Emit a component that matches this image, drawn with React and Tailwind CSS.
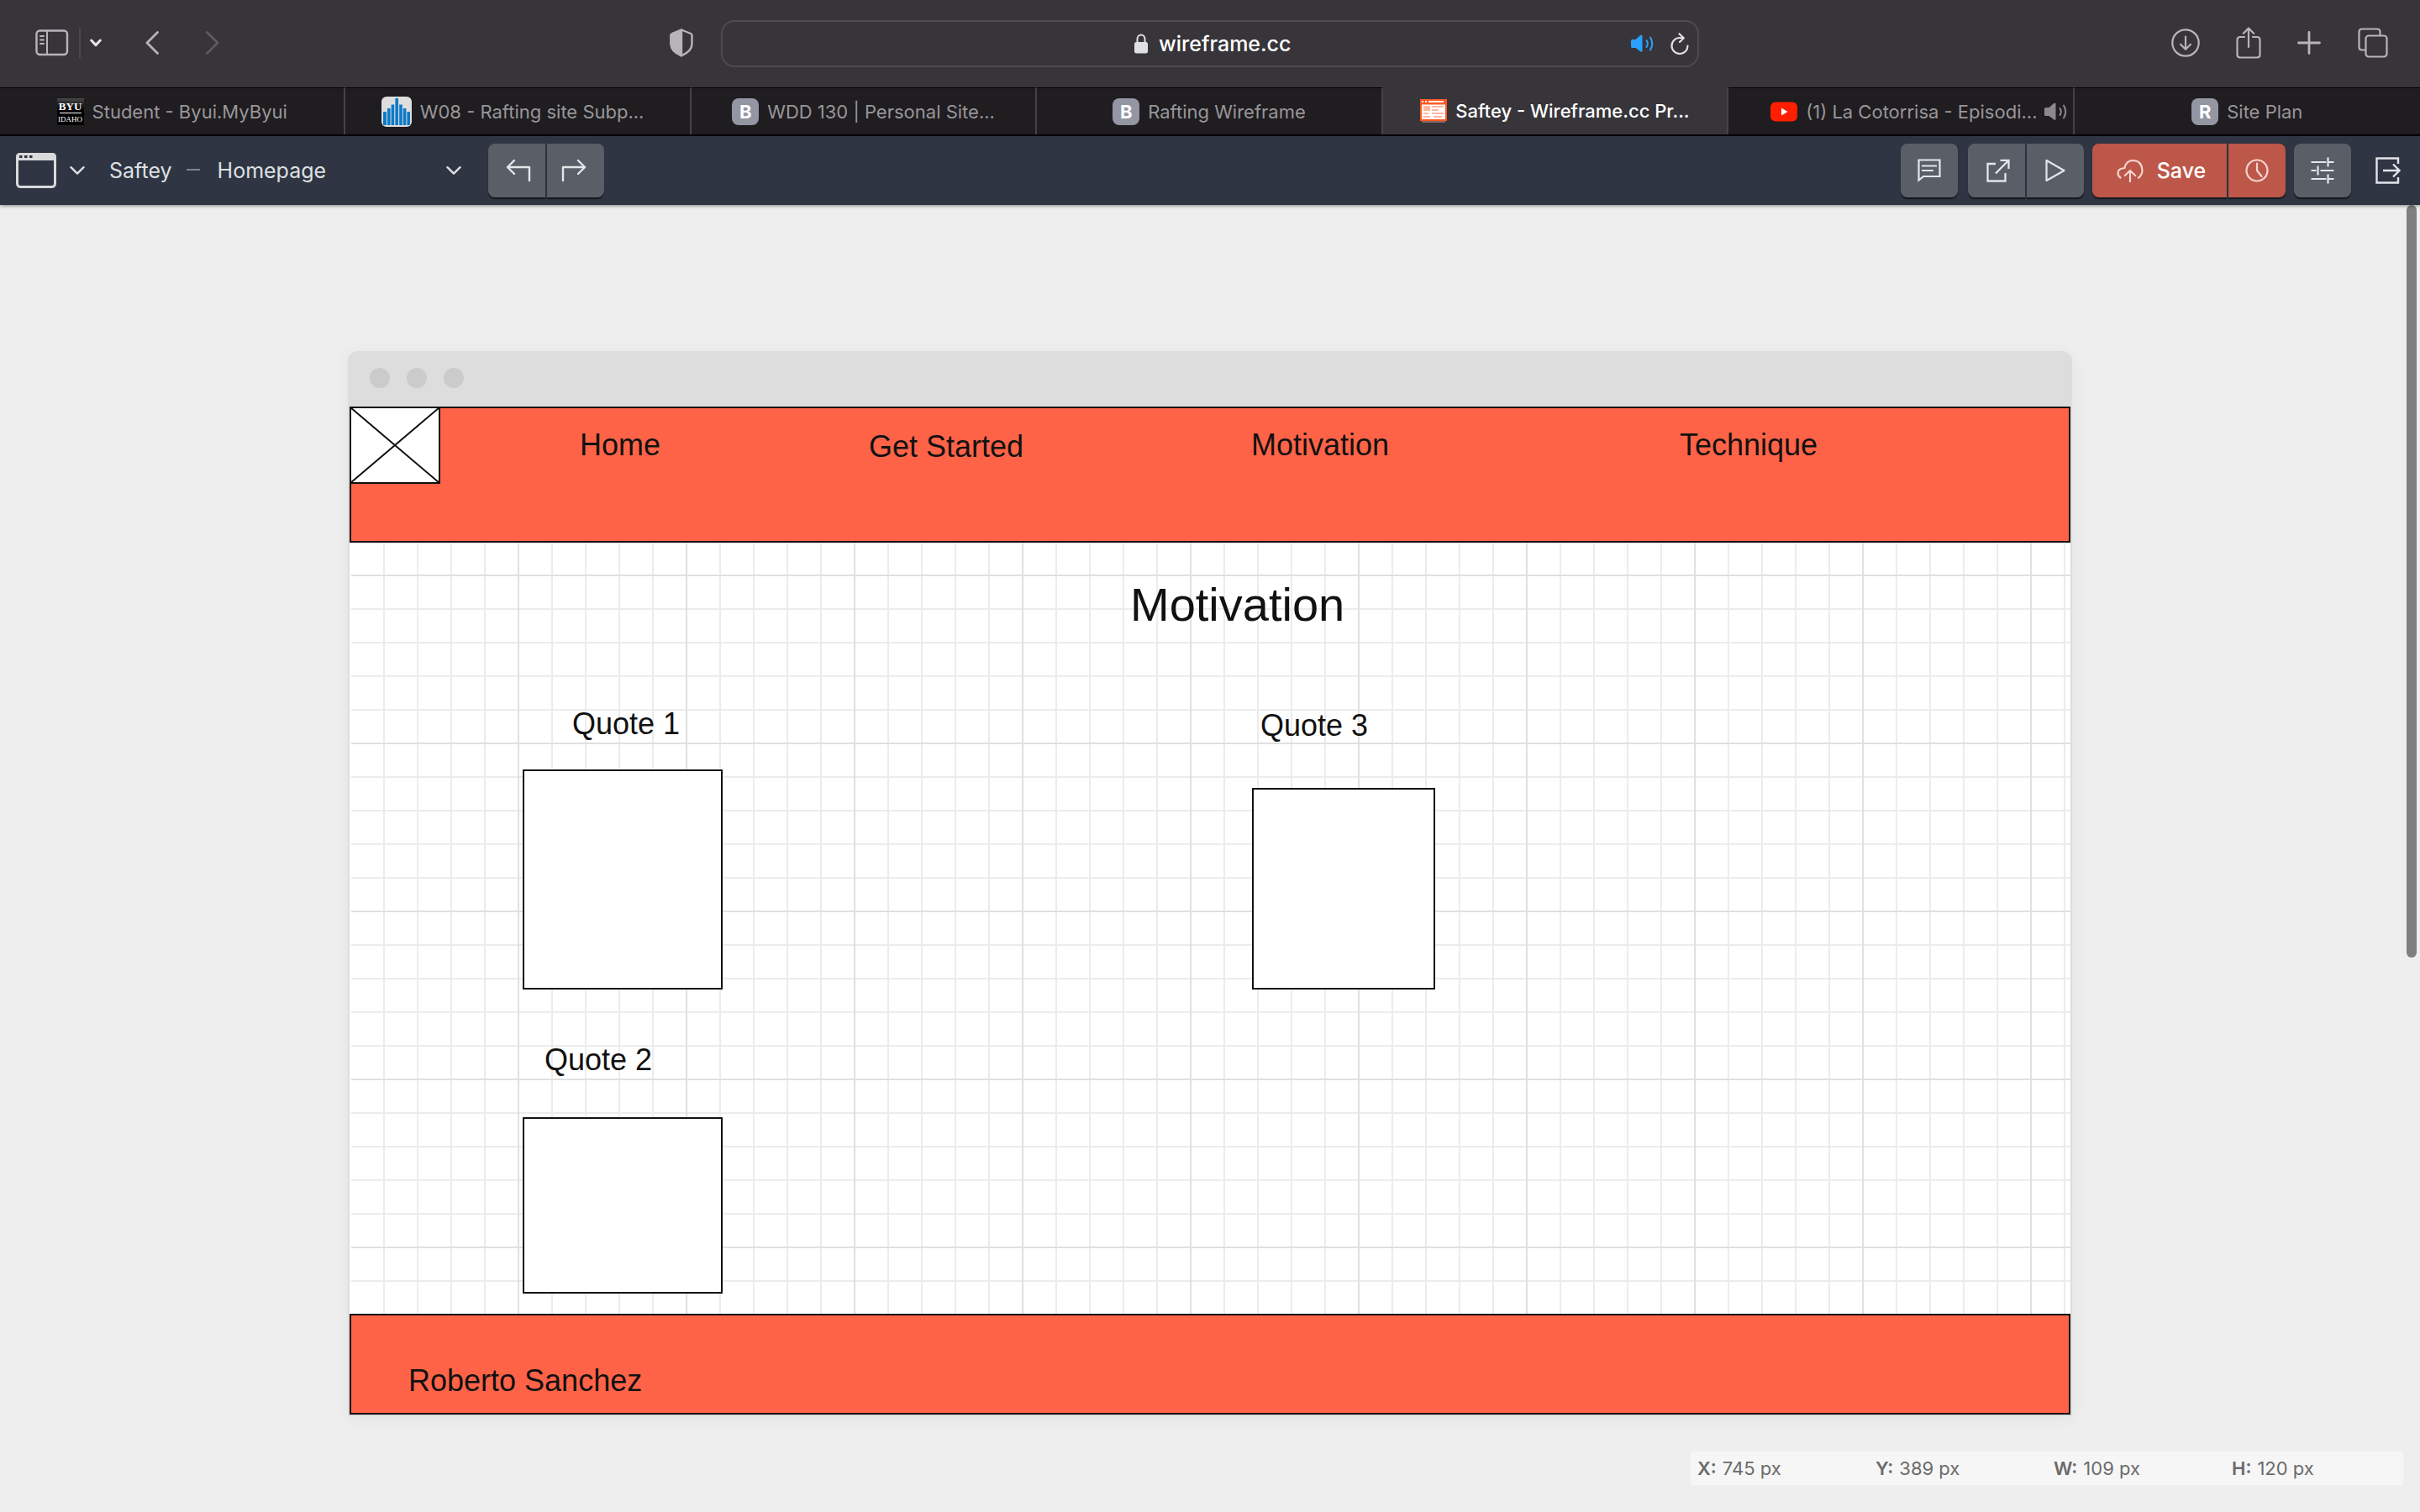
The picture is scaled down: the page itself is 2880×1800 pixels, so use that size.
import React from "react";

const stroke = { fill: "none", stroke: "currentColor", strokeLinecap: "round", strokeLinejoin: "round" };

function Chevron({ className }) {
  return (
    <svg viewBox="0 0 18 10" className={className} {...stroke} strokeWidth="2.4" aria-hidden="true">
      <path d="M1.5 1.2 9 8.6l7.500-7.400" />
    </svg>
  );
}

function Speaker({ className }) {
  return (
    <svg viewBox="0 0 28 22" className={className} {...stroke} strokeWidth="2" aria-hidden="true">
      <path d="M1 7.500Q1 6 2.500 6H6.500L12.500.800Q14.500.200 14.500 2V19.500Q14.500 21.600 12.500 20.600L6.500 16H2.500Q1 16 1 14.500Z" fill="currentColor" stroke="none" />
      <path d="M19.500 7q2.600 4 0 8M24 3.500q4.500 7.500 0 15" />
    </svg>
  );
}

function LetterIcon({ letter }) {
  return (
    <span className="flex size-8 shrink-0 items-center justify-center rounded-lg bg-[#9496a3] text-[22px] font-bold text-white">
      {letter}
    </span>
  );
}

function ByuIcon() {
  return (
    <span className="flex h-8 w-8 shrink-0 flex-col items-center bg-gradient-to-b from-[#4a4a4a] to-black to-60% text-white">
      <span className="mt-[3px] font-['Liberation_Serif',serif] text-[13px] leading-[13px] font-bold">BYU</span>
      <span className="mt-px h-px w-[26px] bg-white" />
      <span className="mt-[2px] font-['Liberation_Serif',serif] text-[9px] leading-[11px]">IDAHO</span>
    </span>
  );
}

function BarsIcon() {
  return (
    <svg viewBox="0 0 36 36" className="size-9 shrink-0" aria-hidden="true">
      <rect width="36" height="36" rx="6" fill="#dedede" />
      <path fill="#0b7ac6" d="M2 18h4v16H2zM7 14h3.600v20H7zM11.600 9.500h3.600V34h-3.600zM16.400 2h3.600v32h-3.600zM21.200 9.500h3.600V34h-3.600zM25.800 14h3.600v20h-3.600zM30.400 18H34v16h-3.600z" />
    </svg>
  );
}

function WireframeIcon() {
  return (
    <svg viewBox="0 0 32 28" className="h-7 w-8 shrink-0" aria-hidden="true">
      <rect x="2" y="24" width="28" height="4" fill="#8b6663" />
      <rect width="32" height="26" fill="#ff5722" />
      <path fill="#fff" d="M2 2h2v2H2zM6 2h2v2H6zM10 2h18v2H10zM2 6.500h28V24H2z" />
      <path fill="#ffb69c" d="M4 8h8v6H4zM14 8h14v2H14zM14 12h8v2h-8zM4 16h6v2H4zM14 16h14v2H14zM4 20h8v2H4zM16 20h10v2H16z" />
    </svg>
  );
}

function YoutubeIcon() {
  return (
    <svg viewBox="0 0 32 24" className="h-6 w-8 shrink-0" aria-hidden="true">
      <rect width="32" height="23" y=".5" rx="6" fill="#ff1f00" />
      <path d="M13 7.500v9l7.500-4.500z" fill="#fff" />
    </svg>
  );
}

const tabs = [
  { label: "Student - Byui.MyByui", icon: <ByuIcon /> },
  { label: "W08 - Rafting site Subp...", icon: <BarsIcon />, pad: "pr-3" },
  { label: "WDD 130 | Personal Site...", icon: <LetterIcon letter="B" /> },
  { label: "Rafting Wireframe", icon: <LetterIcon letter="B" /> },
  { label: "Saftey - Wireframe.cc Pr...", icon: <WireframeIcon />, active: true },
  { label: "(1) La Cotorrisa - Episodi...", icon: <YoutubeIcon />, audio: true, pad: "pl-4" },
  { label: "Site Plan", icon: <LetterIcon letter="R" /> },
];

function BrowserBar() {
  return (
    <header className="flex h-[104px] items-center bg-[#37353a] pb-[2px] text-[#b7b4ba]">
      <div className="flex flex-1 items-center pl-[38px]">
        <button aria-label="Sidebar" className="ml-1">
          <svg viewBox="0 0 40 32" className="h-8 w-10" {...stroke} strokeWidth="2.400" aria-hidden="true">
            <rect x="1.500" y="1.500" width="36.500" height="28.500" rx="4" />
            <path d="M14 1.500V30M6 8h4M6 12.500h4M6 17h4" strokeWidth="2" />
          </svg>
        </button>
        <span className="ml-3 h-9 w-[2px] bg-[#4a484d]" />
        <button aria-label="Tab groups" className="ml-[11px] text-[#e6e4e8]">
          <svg viewBox="0 0 14 10" className="h-[10px] w-[14px]" {...stroke} strokeWidth="3" aria-hidden="true">
            <path d="M1.700 2 7 7.600 12.300 2" />
          </svg>
        </button>
        <button aria-label="Back" className="ml-[52px]">
          <svg viewBox="0 0 16 28" className="h-7 w-4" {...stroke} strokeWidth="2.800" aria-hidden="true">
            <path d="M14.500 1.500 2 14l12.500 12.500" />
          </svg>
        </button>
        <button aria-label="Forward" className="ml-14 text-[#5d5b60]">
          <svg viewBox="0 0 16 28" className="h-7 w-4" {...stroke} strokeWidth="2.800" aria-hidden="true">
            <path d="M1.500 1.500 14 14 1.500 26.500" />
          </svg>
        </button>
        <button aria-label="Privacy report" className="mr-[33px] ml-auto">
          <svg viewBox="0 0 28 34" className="h-[34px] w-7" {...stroke} strokeWidth="2.400" aria-hidden="true">
            <path d="M14 1.500 25 6Q26.500 6.600 26.500 8V18Q26.500 27 14 32.300 1.500 27 1.500 18V8Q1.500 6.600 3 6Z" />
            <path d="M14 1.500V32.300Q1.500 27 1.500 18V8Q1.500 6.600 3 6Z" fill="currentColor" />
          </svg>
        </button>
      </div>
      <div className="relative mt-[2px] flex h-14 w-[1164px] items-center justify-center rounded-2xl border-2 border-[#4d4b50] pl-2 text-white">
        <svg viewBox="0 0 18 24" className="mr-3 h-6 w-[18px] text-[#e0e0e2]" aria-hidden="true">
          <rect x="1" y="10" width="16" height="13.500" rx="2.500" fill="currentColor" />
          <path d="M4.500 11V6.500a4.500 5 0 0 1 9 0V11" {...stroke} strokeWidth="2" />
        </svg>
        <input aria-label="Address" readOnly value="wireframe.cc" className="w-[160px] bg-transparent text-[25px] leading-8 font-medium outline-none" />
        <div className="absolute right-[10px] flex items-center gap-5">
          <button aria-label="Mute tab" className="text-[#2aa0ff]">
            <Speaker className="h-[22px] w-7" />
          </button>
          <button aria-label="Reload" className="text-[#e0dfe2]">
            <svg viewBox="0 0 22 26" className="h-[26px] w-[22px]" {...stroke} strokeWidth="2.200" aria-hidden="true">
              <path d="M20.500 15.500A9.500 9.500 0 1 1 11 6h4.500M10.500 1.200 15.800 6.200 11 11" />
            </svg>
          </button>
        </div>
      </div>
      <div className="flex flex-1 items-center justify-end pr-[38px]">
        <button aria-label="Downloads">
          <svg viewBox="0 0 34 34" className="size-[34px]" {...stroke} strokeWidth="2.200" aria-hidden="true">
            <circle cx="17" cy="17" r="15.700" />
            <path d="M17 9.500V24.500M11 18.800l6 6 6-6" />
          </svg>
        </button>
        <button aria-label="Share" className="ml-[42px]">
          <svg viewBox="0 0 32 38" className="h-[38px] w-8" {...stroke} strokeWidth="2.200" aria-hidden="true">
            <path d="M11 12H6Q2.500 12 2.500 15.500V33Q2.500 36.500 6 36.500H26Q29.500 36.500 29.500 33V15.500Q29.500 12 26 12H21M16 24V2M9.800 7.800 16 1.600l6.200 6.200" />
          </svg>
        </button>
        <button aria-label="New tab" className="ml-[42px]">
          <svg viewBox="0 0 28 28" className="size-7" {...stroke} strokeWidth="2.800" aria-hidden="true">
            <path d="M14 1.500v25M1.500 14h25" />
          </svg>
        </button>
        <button aria-label="Tab overview" className="ml-11">
          <svg viewBox="0 0 36 36" className="size-9" {...stroke} strokeWidth="2.200" aria-hidden="true">
            <rect x="9.500" y="9.500" width="25" height="25" rx="3.500" />
            <path d="M9 26.500H5Q1.500 26.500 1.500 23V5Q1.500 1.500 5 1.500H23Q26.500 1.500 26.500 5V9" />
          </svg>
        </button>
      </div>
    </header>
  );
}

function TabBar() {
  return (
    <nav aria-label="Tabs" className="grid h-[58px] grid-cols-7 border-b-2 border-black bg-[#1f1d20]">
      {tabs.map((tab) => (
        <a
          key={tab.label}
          href="#tab"
          className={
            "flex min-w-0 items-center justify-center border-r-2 border-r-[#454348] text-[22px] leading-7 last:border-r-0 " +
            (tab.active ? "bg-[#37353a] font-medium text-white" : "border-t border-t-black text-[#98969a]") +
            " " + (tab.pad || "")
          }
        >
          {tab.icon}
          <span className="ml-[10px] whitespace-nowrap">{tab.label}</span>
          {tab.audio && <Speaker className="-mr-7 ml-2 h-[22px] w-7 shrink-0 text-[#8a888c]" />}
        </a>
      ))}
    </nav>
  );
}

const gray = "flex h-16 w-[68px] items-center justify-center bg-[#5a5e67] text-[#e4e6e8] shadow-[0_2px_1px_#15181c]";
const red = "flex h-16 items-center justify-center bg-[#bd5749] shadow-[0_2px_1px_#15181c]";

function Toolbar() {
  return (
    <div className="relative z-10 flex h-[82px] items-center bg-[#2f3542] pr-[23px] pl-[19px] text-[#dde0e3] shadow-[0_1px_4px_rgba(0,0,0,0.45)]">
      <button aria-label="Template" className="flex items-center gap-4">
        <svg viewBox="0 0 48 42" className="h-[42px] w-12" aria-hidden="true">
          <rect x="1.500" y="1.500" width="45" height="39" rx="4" fill="none" stroke="#d8dadc" strokeWidth="3" />
          <path d="M0 9V5Q0 0 5 0H43Q48 0 48 5V9Z" fill="#d8dadc" />
          <path d="M4 3h3.500v3H4zM10 3h3.500v3H10zM16 3h3.500v3H16z" fill="#2f3542" />
        </svg>
        <Chevron className="h-[10px] w-[18px]" />
      </button>
      <span className="ml-[29px] text-[25px] leading-8">Saftey</span>
      <span className="ml-[17px] h-1 w-4 border-t-2 border-[#7e838c]" />
      <button className="ml-[21px] flex w-[290px] items-center justify-between text-[25px] leading-8">
        Homepage
        <Chevron className="h-[10px] w-[18px]" />
      </button>
      <div className="ml-[32px] flex gap-[2px]">
        <button aria-label="Undo" className={gray + " rounded-l-lg"}>
          <svg viewBox="0 0 30 28" className="ml-1 h-7 w-[30px]" {...stroke} strokeWidth="2.400" aria-hidden="true">
            <path d="M28 26V10H2M10 2 2 10l8 8" />
          </svg>
        </button>
        <button aria-label="Redo" className={gray + " rounded-r-lg"}>
          <svg viewBox="0 0 30 28" className="mr-1 h-7 w-[30px]" {...stroke} strokeWidth="2.400" aria-hidden="true">
            <path d="M2 26V10H28M20 2l8 8-8 8" />
          </svg>
        </button>
      </div>
      <div className="ml-auto flex items-center">
        <button aria-label="Comments" className={gray + " rounded-lg"}>
          <svg viewBox="0 0 28 28" className="size-7" fill="none" stroke="currentColor" strokeWidth="2.200" aria-hidden="true">
            <path d="M1.500 25.500V1.500h25v19.500H7zM5 8.500h18M5 14h14" />
          </svg>
        </button>
        <div className="ml-3 flex gap-[2px]">
          <button aria-label="Open" className={gray + " rounded-l-lg"}>
            <svg viewBox="0 0 28 28" className="ml-1 size-7" fill="none" stroke="currentColor" strokeWidth="2.300" aria-hidden="true">
              <path d="M11 6H1.500V26.500H22.500V17M16.500 1.800H26.500V12M26 2.300 11 17.500" />
            </svg>
          </button>
          <button aria-label="Preview" className={gray + " rounded-r-lg"}>
            <svg viewBox="0 0 24 28" className="h-7 w-6" {...stroke} strokeWidth="2.200" aria-hidden="true">
              <path d="M1.500 2v24L22.500 14z" />
            </svg>
          </button>
        </div>
        <div className="ml-[10px] flex gap-[2px]">
          <button className={red + " w-40 gap-4 rounded-l-lg pl-1 text-[25px] leading-8 font-medium text-white"}>
            <svg viewBox="0 0 32 28" className="h-7 w-8 text-[#f4d5d0]" {...stroke} strokeWidth="2.200" aria-hidden="true">
              <path d="M4.500 22.500Q1.500 20.500 1.500 17 1.500 11.500 9.500 11 11 2 20 2 30 2.500 30.500 14q-.2 5.500-4.500 8.500M16 27V14.500M9.800 20 16 14l6.200 6" />
            </svg>
            Save
          </button>
          <button aria-label="History" className={red + " w-[68px] rounded-r-lg text-[#f4d5d0]"}>
            <svg viewBox="0 0 28 28" className="size-7" {...stroke} strokeWidth="2.200" aria-hidden="true">
              <circle cx="14" cy="14" r="12.500" />
              <path d="M14 5.500V14l5.500 7" />
            </svg>
          </button>
        </div>
        <button aria-label="Settings" className={gray + " ml-[10px] rounded-lg"}>
          <svg viewBox="0 0 28 32" className="h-8 w-7" fill="none" stroke="currentColor" strokeWidth="2.200" aria-hidden="true">
            <path d="M.5 6H18.500M20.500 6H27.500M20.500.5V11.500M.5 16H6.500M11.500 16H27.500M8.500 10.500v11M.5 26H18.500M20.500 26H27.500M20.500 20.500v11" />
          </svg>
        </button>
        <button aria-label="Exit" className="ml-[29px] text-[#e4e3ea]">
          <svg viewBox="0 0 30 32" className="h-8 w-[30px]" fill="none" stroke="currentColor" strokeWidth="2.400" aria-hidden="true">
            <path d="M27 8V1.500H1.500V30.500H27V24M9 16H28M21 8.500 28.500 16 21 23.500" />
          </svg>
        </button>
      </div>
    </div>
  );
}

const navLinks = [
  { label: "Home", place: "top-[24px] left-[272px]" },
  { label: "Get Started", place: "top-[26px] left-[616px]" },
  { label: "Motivation", place: "top-[24px] left-[1071px]" },
  { label: "Technique", place: "top-[24px] left-[1581px]" },
];

const gridLines =
  "bg-[linear-gradient(to_right,#e0e0e0_2px,transparent_2px),linear-gradient(to_bottom,#e0e0e0_2px,transparent_2px),linear-gradient(to_right,#ececec_2px,transparent_2px),linear-gradient(to_bottom,#ececec_2px,transparent_2px)] bg-[size:200px_200px,200px_200px,40px_40px,40px_40px] bg-[position:198px_38px,198px_38px,38px_38px,38px_38px]";

function Canvas() {
  return (
    <section className="mx-auto max-w-[2052px] rounded-t-xl shadow-[0_2px_20px_rgba(0,0,0,0.05)]">
      <div className="flex h-[66px] items-center gap-5 rounded-t-xl bg-[#dddddd] px-[26px] pb-[2px]">
        <span className="size-6 rounded-full bg-[#cbcbcb]" />
        <span className="size-6 rounded-full bg-[#cbcbcb]" />
        <span className="size-6 rounded-full bg-[#cbcbcb]" />
      </div>
      <div className="border-2 border-t-0 border-[#dddddd] bg-white font-['Liberation_Sans',Arial,sans-serif] text-4xl leading-10 text-[#111]">
        <nav aria-label="Wireframe" className="relative h-[162px] border-2 border-[#111] bg-[#ff6347]">
          <svg viewBox="0 0 108 92" className="-mt-[2px] -ml-[2px] h-[92px] w-[108px]" fill="#fff" stroke="#111" strokeWidth="2" aria-hidden="true">
            <rect x="1" y="1" width="106" height="90" />
            <path d="M1 1l106 90M107 1 1 91" />
          </svg>
          {navLinks.map((link) => (
            <a key={link.label} href="#page" className={"absolute whitespace-nowrap " + link.place}>
              {link.label}
            </a>
          ))}
        </nav>
        <div className={"relative h-[918px] border-l-2 border-white " + gridLines}>
          <h1 className="absolute top-[42px] left-[927px] text-[56px] leading-[64px]">Motivation</h1>
          <h2 className="absolute top-[196px] left-[263px]">Quote 1</h2>
          <div className="absolute top-[270px] left-[204px] h-[262px] w-[238px] border-2 border-[#111] bg-white" />
          <h2 className="absolute top-[596px] left-[230px]">Quote 2</h2>
          <div className="absolute top-[684px] left-[204px] h-[210px] w-[238px] border-2 border-[#111] bg-white" />
          <h2 className="absolute top-[198px] left-[1082px]">Quote 3</h2>
          <div className="absolute top-[292px] left-[1072px] h-[240px] w-[218px] border-2 border-[#111] bg-white" />
        </div>
        <footer className="flex h-[120px] items-end border-2 border-[#111] bg-[#ff6347] pb-[18px] pl-[68px]">Roberto Sanchez</footer>
      </div>
    </section>
  );
}

const status = [
  ["X:", "745 px"],
  ["Y:", "389 px"],
  ["W:", "109 px"],
  ["H:", "120 px"],
];

export default function App() {
  return (
    <div className="flex min-h-screen flex-col bg-[#eeeeee] font-[Inter,sans-serif]">
      <BrowserBar />
      <TabBar />
      <Toolbar />
      <main className="relative flex-1 pt-[174px]">
        <Canvas />
        <div className="absolute top-0 right-1 h-[896px] w-3 rounded-full bg-[#7f7f7f]" />
        <dl className="absolute right-5 bottom-8 grid h-10 w-[848px] grid-cols-4 items-center bg-[#f6f6f6] text-[22px] leading-7 text-[#6b6b6b]">
          {status.map(([name, value]) => (
            <div key={name} className="flex gap-[7px] pl-2">
              <dt className="font-semibold">{name}</dt>
              <dd>{value}</dd>
            </div>
          ))}
        </dl>
      </main>
    </div>
  );
}
